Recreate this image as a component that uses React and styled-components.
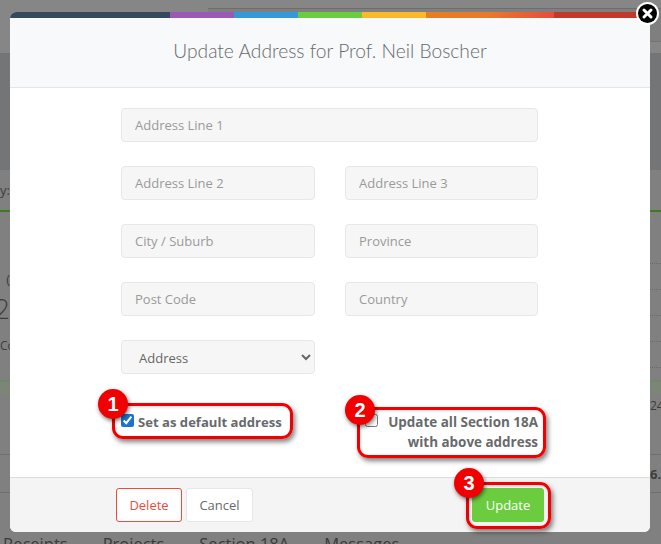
import React from 'react'
import styled, { createGlobalStyle } from 'styled-components'

const GlobalStyle = createGlobalStyle`
  html, body { margin: 0; padding: 0; height: 100%; overflow: hidden; background: #808080; }
  * { box-sizing: border-box; }
  body { font-family: "Open Sans", "Liberation Sans", sans-serif; }
`

const stripes = [
  { color: '#34495e', width: 160 },
  { color: '#9b59b6', width: 64 },
  { color: '#3498db', width: 64 },
  { color: '#6ccc3f', width: 64 },
  { color: '#fbb829', width: 64 },
  { color: 'linear-gradient(to right, #e67e22, #e8792b 50%, #e74c3c)', width: 128 },
  { color: '#c0392b', width: 96 },
]

const Screen = styled.div`
  position: relative;
  width: 661px;
  height: 544px;
  overflow: hidden;
  background: #808080;
`

/* dimmed page behind the dialog */
const Behind = styled.div`
  display: flex;
  flex-direction: column;
  width: 100%;
  height: 100%;
  color: #3d3d3d;
`
const TopBand = styled.div`
  flex: none;
  height: 54px;
  padding: 8px 0 0 208px;
  background: #868686;
  border-bottom: 1px solid #747474;
`
const TopCard = styled.div`
  height: 34px;
  background: #7f7f7f;
  border-top: 1px solid #6e6e6e;
  border-bottom: 1px solid #747474;
`
const BehindRow = styled.div`
  flex: none;
  height: ${p => p.$h}px;
  display: flex;
  justify-content: space-between;
  align-items: ${p => p.$align || 'center'};
  padding-top: ${p => p.$pad || 0}px;
  background: ${p => p.$bg || 'transparent'};
  border-top: ${p => p.$top || 'none'};
  border-bottom: ${p => p.$line || 'none'};
  font-size: ${p => p.$size || 13}px;
  font-weight: ${p => p.$weight || 400};
  overflow: hidden;
`
const Middle = styled.div`
  flex: none;
  height: 168px;
  display: flex;
  justify-content: space-between;
`
const MiddleLeft = styled.div`
  display: flex;
  flex-direction: column;
`
const DotColumn = styled.div`
  width: 11px;
  display: flex;
  flex-direction: column;
  gap: 25px;
  padding-top: 51px;
`
const DotLine = styled.div`
  height: 1px;
  border-top: 1px dotted #6a6a6a;
`
const LeftBit = styled.span`
  display: flex;
  justify-content: ${p => (p.$start ? 'flex-start' : 'flex-end')};
  width: 10px;
  overflow: hidden;
  white-space: nowrap;
  font-size: ${p => p.$size || 13}px;
  font-weight: ${p => p.$weight || 400};
`
const RightBit = styled.span`
  display: block;
  width: 11px;
  overflow: hidden;
  white-space: nowrap;
`
const Tabs = styled.div`
  position: absolute;
  left: 3px;
  top: 533px;
  display: flex;
  gap: 35px;
  font-size: 16.5px;
  line-height: 22px;
  color: #3a3a3a;
`

const Modal = styled.div`
  position: absolute;
  left: 10px;
  top: 12px;
  width: 640px;
  height: 520px;
  display: flex;
  flex-direction: column;
  background: #fff;
  border-radius: 6px;
`
const StripeBar = styled.div`
  display: flex;
  flex: none;
  height: 6px;
  border-radius: 6px 0 0 0;
  overflow: hidden;
`
const Stripe = styled.div`
  flex: none;
  width: ${p => p.$width}px;
  background: ${p => p.$color};
`
const Header = styled.div`
  flex: none;
  height: 70px;
  display: flex;
  align-items: center;
  justify-content: center;
  background: #f7f9fb;
  border-bottom: 1px solid #e5e5e5;
`
const Title = styled.h4`
  margin: 0 0 4px;
  font-family: "Lato", "Open Sans", sans-serif;
  font-size: 19.2px;
  font-weight: 300;
  color: #676a6c;
`
const Body = styled.div`
  flex: 1;
  padding: 20px 112px 0 111px;
`
const FormGrid = styled.div`
  display: grid;
  grid-template-columns: 194px 193px;
  column-gap: 30px;
  row-gap: 24px;
`
const Field = styled.input`
  grid-column: ${p => (p.$wide ? '1 / -1' : 'auto')};
  height: 34px;
  width: 100%;
  padding: 0 13px;
  background: #f6f6f6;
  border: 1px solid #e7e7e7;
  border-radius: 4px;
  font: 400 13px "Open Sans", sans-serif;
  color: #666;
  &::placeholder { color: #9a9a9a; opacity: 1; }
`
const Select = styled.select`
  height: 34px;
  width: 100%;
  padding: 1px 13px 0;
  background: #f6f6f6;
  border: 1px solid #e7e7e7;
  border-radius: 4px;
  font: 400 13px "Open Sans", sans-serif;
  color: #666;
`
const Checks = styled.div`
  display: grid;
  grid-template-columns: 194px 193px;
  column-gap: 30px;
  margin-top: 37px;
`
const CheckLabel = styled.label`
  display: flex;
  align-items: flex-start;
  justify-content: ${p => (p.$right ? 'space-between' : 'flex-start')};
  gap: 4px;
  font-size: ${p => (p.$right ? 13.45 : 13.1)}px;
  font-weight: 700;
  line-height: 20px;
  color: #676a6c;
`
const CheckText = styled.span`
  padding-top: 1px;
  white-space: nowrap;
  text-align: ${p => (p.$right ? 'right' : 'left')};
`
const Box = styled.input`
  flex: none;
  width: 13px;
  height: 13px;
  margin: 3px 0 0 ${p => p.$indent || 0}px;
  accent-color: #1a73d0;
`
const Footer = styled.div`
  flex: none;
  height: 55px;
  display: flex;
  gap: 4px;
  padding: 10px 106px;
  background: #f4f4f4;
  border-top: 1px solid #dcdcdc;
  border-radius: 0 0 6px 6px;
`
const Button = styled.button`
  height: 34px;
  padding: 0;
  width: ${p => p.$w}px;
  margin-left: ${p => (p.$push ? 'auto' : '0')};
  border: 1px solid ${p => p.$border};
  border-radius: 3px;
  background: ${p => p.$bg};
  color: ${p => p.$fg};
  font: 400 13px "Open Sans", sans-serif;
`

/* red callouts drawn on top of the screenshot */
const Callout = styled.div`
  position: absolute;
  left: ${p => p.$x}px;
  top: ${p => p.$y}px;
  width: ${p => p.$w}px;
  height: ${p => p.$h}px;
  border: 3px solid #f00000;
  border-radius: 11px;
  box-shadow: 2px 3px 5px rgba(0, 0, 0, 0.5), inset 1px 1px 3px rgba(0, 0, 0, 0.15);
  pointer-events: none;
`
const Badge = styled.div`
  position: absolute;
  left: ${p => p.$x - 15}px;
  top: ${p => p.$y - 15}px;
  width: 30px;
  height: 30px;
  display: flex;
  align-items: center;
  justify-content: center;
  border-radius: 50%;
  background: #f00000;
  box-shadow: 1px 2px 4px rgba(0, 0, 0, 0.55);
  color: #fff;
  font: 700 20px "Liberation Sans", sans-serif;
`
const Close = styled.svg`
  position: absolute;
  left: 636px;
  top: 2px;
`

const CloseIcon = () => (
  <Close width="23" height="23" viewBox="0 0 23 23">
    <circle cx="11.5" cy="11.5" r="11.5" fill="#fff" />
    <circle cx="11.5" cy="11.5" r="9.5" fill="#000" />
    <path d="M8 8l7 7M15 8l-7 7" stroke="#fff" strokeWidth="3" strokeLinecap="round" />
  </Close>
)

export default function App() {
  return (
    <Screen>
      <GlobalStyle />
      <Behind>
        <TopBand>
          <TopCard />
        </TopBand>
        <BehindRow $h={116} $bg="#737577" />
        <BehindRow $h={42} $line="2px solid #3f7a1f">
          <LeftBit>y:</LeftBit>
        </BehindRow>
        <Middle>
          <MiddleLeft>
            <BehindRow $h={76} $align="flex-end">
              <LeftBit>(</LeftBit>
            </BehindRow>
            <BehindRow $h={40}>
              <LeftBit $size={27} $weight={300}>2</LeftBit>
            </BehindRow>
            <BehindRow $h={34}>
              <LeftBit $start $size={12}>Co</LeftBit>
            </BehindRow>
          </MiddleLeft>
          <DotColumn>
            <DotLine />
            <DotLine />
            <DotLine />
            <DotLine />
            <DotLine />
          </DotColumn>
        </Middle>
        <BehindRow $h={14} $bg="#7b8676" $top="2px solid #72866a" />
        <BehindRow $h={61} $align="flex-start" $pad={3} $line="1px solid #6f6f6f" $size={12}>
          <LeftBit />
          <RightBit>24-</RightBit>
        </BehindRow>
        <BehindRow $h={38} $line="1px solid #6f6f6f" $weight={700}>
          <LeftBit />
          <RightBit>6.4</RightBit>
        </BehindRow>
      </Behind>
      <Tabs>
        <span>Receipts</span>
        <span>Projects</span>
        <span>Section 18A</span>
        <span>Messages</span>
      </Tabs>

      <Modal>
        <StripeBar>
          {stripes.map(s => (
            <Stripe key={s.width + s.color} $width={s.width} $color={s.color} />
          ))}
        </StripeBar>
        <Header>
          <Title>Update Address for Prof. Neil Boscher</Title>
        </Header>
        <Body>
          <FormGrid>
            <Field $wide placeholder="Address Line 1" />
            <Field placeholder="Address Line 2" />
            <Field placeholder="Address Line 3" />
            <Field placeholder="City / Suburb" />
            <Field placeholder="Province" />
            <Field placeholder="Post Code" />
            <Field placeholder="Country" />
            <Select defaultValue="Address">
              <option>Address</option>
            </Select>
          </FormGrid>
          <Checks>
            <CheckLabel>
              <Box type="checkbox" defaultChecked />
              <CheckText>Set as default address</CheckText>
            </CheckLabel>
            <CheckLabel $right>
              <Box type="checkbox" $indent={20} />
              <CheckText $right>
                Update all Section 18A
                <br />
                with above address
              </CheckText>
            </CheckLabel>
          </Checks>
        </Body>
        <Footer>
          <Button $w={66} $bg="#fff" $fg="#e74c3c" $border="#e74c3c">Delete</Button>
          <Button $w={67} $bg="#fff" $fg="#676a6c" $border="#e5e6e7">Cancel</Button>
          <Button $push $w={72} $bg="#6ccc3f" $fg="#fff" $border="#6ccc3f">Update</Button>
        </Footer>
      </Modal>

      <CloseIcon />
      <Callout $x={112} $y={403} $w={181} $h={36} />
      <Callout $x={357} $y={407} $w={189} $h={51} />
      <Callout $x={466} $y={482} $w={85} $h={47} />
      <Badge $x={113} $y={404}>1</Badge>
      <Badge $x={360} $y={410}>2</Badge>
      <Badge $x={469} $y={483}>3</Badge>
    </Screen>
  )
}
